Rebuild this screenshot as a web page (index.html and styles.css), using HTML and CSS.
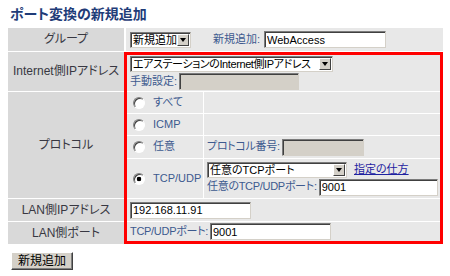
FILE: index.html
```html
<!DOCTYPE html>
<html lang="ja">
<head>
<meta charset="utf-8">
<title>ポート変換の新規追加</title>
<link rel="stylesheet" href="styles.css">
</head>
<body>
<h1 class="title">ポート変換の新規追加</h1>
<form class="port-form">
<table class="form">
  <tr class="row-group">
    <th class="head sep">グループ</th>
    <td class="val plain">
      <div class="line">
        <span class="ctl sel-group"><select><option>新規追加</option></select><span class="arrow"></span></span>
        <span class="lbl new-lbl">新規追加:</span><input class="text in-group" type="text" value="WebAccess">
      </div>
    </td>
  </tr>
  <tr class="row-inet">
    <th class="head sep">Internet側IPアドレス</th>
    <td class="val hl hl-top cut">
      <div class="line">
        <span class="ctl sel-inet"><select class="narrow"><option>エアステーションのInternet側IPアドレス</option></select><span class="arrow"></span></span>
      </div>
      <div class="line line-gap">
        <span class="lbl">手動設定:</span><input class="text in-manual" type="text" disabled>
      </div>
    </td>
  </tr>
  <tr class="row-proto">
    <th class="head sep">プロトコル</th>
    <td class="val hl cut proto-cell">
      <table class="proto">
        <tr class="p-all">
          <td class="opt"><label class="radio"><input type="radio" name="proto"><span>すべて</span></label></td>
          <td class="det"></td>
        </tr>
        <tr class="p-icmp">
          <td class="opt"><label class="radio"><input type="radio" name="proto"><span>ICMP</span></label></td>
          <td class="det"></td>
        </tr>
        <tr class="p-any">
          <td class="opt"><label class="radio"><input type="radio" name="proto"><span>任意</span></label></td>
          <td class="det"><div class="line"><span class="lbl tight">プロトコル番号:</span><input class="text in-protonum" type="text" disabled></div></td>
        </tr>
        <tr class="p-tcp">
          <td class="opt"><label class="radio"><input type="radio" name="proto" checked><span>TCP/UDP</span></label></td>
          <td class="det">
            <div class="line">
              <span class="ctl sel-tcp"><select><option>任意のTCPポート</option></select><span class="arrow"></span></span>
              <a class="how" href="#">指定の仕方</a>
            </div>
            <div class="line line-gap">
              <span class="lbl tight">任意のTCP/UDPポート:</span><input class="text in-tcpport" type="text" value="9001">
            </div>
          </td>
        </tr>
      </table>
    </td>
  </tr>
  <tr class="row-lanip">
    <th class="head sep">LAN側IPアドレス</th>
    <td class="val hl cut">
      <div class="line"><input class="text in-lanip" type="text" value="192.168.11.91"></div>
    </td>
  </tr>
  <tr class="row-lanport">
    <th class="head">LAN側ポート</th>
    <td class="val hl hl-bottom">
      <div class="line"><span class="lbl tight">TCP/UDPポート:</span><input class="text in-lanport" type="text" value="9001"></div>
    </td>
  </tr>
</table>
<button class="submit" type="button">新規追加</button>
</form>
</body>
</html>
```
FILE: styles.css
```css
* { box-sizing: border-box; }
html, body { margin: 0; background: #fff; }
body {
  padding: 6px 0 0 8px;
  font-family: "Liberation Sans", "Noto Sans CJK JP", sans-serif;
  font-size: 11px;
  line-height: 1.2;
  font-feature-settings: "palt";
  color: #3d5a8f;
}
.title {
  margin: 0 0 6px 2px;
  height: 16px;
  font-size: 14px;
  line-height: 16px;
  font-weight: bold;
  color: #1f3c78;
}
.port-form { margin: 0; }

.form {
  width: 435px;
  border-collapse: separate;
  border-spacing: 0;
  table-layout: fixed;
}
.form .head {
  width: 116px;
  padding: 0;
  background: #d9d9d9;
  color: #383842;
  font-size: 12px;
  font-weight: normal;
  text-align: center;
  vertical-align: middle;
}
.form .head.sep { border-bottom: 1px solid #fff; }

.val {
  padding: 0 0 0 3px;
  background: #e8e8e8;
  vertical-align: middle;
}
.val.plain { border-left: 2px solid #fff; border-bottom: 1px solid #fff; padding-left: 4px; }
.val.hl { border-left: 3px solid #f00; border-right: 3px solid #f00; }
.val.hl-top { border-top: 3px solid #f00; }
.val.hl-bottom { border-bottom: 3px solid #f00; }
.val.cut { box-shadow: inset 0 -1px 0 #fff; padding-bottom: 1px; }
.val.proto-cell { padding: 0 0 1px 0; }

.row-group > * { height: 24px; }
.row-inet > * { height: 40px; }
.row-proto > * { height: 107px; }
.row-lanip > * { height: 23px; }
.row-lanport > * { height: 22px; }

.line { display: flex; align-items: center; }
.line-gap { margin-top: 1px; }
.lbl { white-space: nowrap; }
.lbl.tight { letter-spacing: -0.3px; }
.new-lbl { margin-left: 22px; margin-right: 2px; }
.lbl + .text { margin-left: 2px; }

/* nested protocol table */
.proto {
  width: 100%;
  border-collapse: separate;
  border-spacing: 0;
  table-layout: fixed;
}
.proto td { background: #e8e8e8; padding: 0; vertical-align: middle; }
.proto tr:not(:last-child) td { border-bottom: 1px solid #fff; }
.proto .opt { width: 77px; border-right: 1px solid #fff; }
.proto .det { padding-left: 3px; padding-right: 2px; }
.p-all > td, .p-icmp > td { height: 22px; }
.p-any > td { height: 23px; }
.p-tcp > td { height: 39px; }

.radio { display: flex; align-items: center; padding-left: 6px; white-space: nowrap; }
.radio input {
  -webkit-appearance: none;
  appearance: none;
  width: 12px;
  height: 12px;
  margin: 0 8px 0 0;
  border-radius: 50%;
  border: 1px solid;
  border-color: #808080 #fff #fff #808080;
  box-shadow: inset 1px 1px 0 #404040;
  background: #fff;
  flex: none;
}
.radio input:checked {
  background: radial-gradient(circle at 50% 50%, #000 0 2px, #fff 2.6px);
}

/* select-like control */
.ctl {
  display: inline-flex;
  align-items: stretch;
  height: 16px;
  background: #fff;
  border: 1px solid;
  border-color: #7b7b7b #d4d0c8 #d4d0c8 #7b7b7b;
  box-shadow: inset 1px 1px 0 #404040;
  flex: none;
}
.ctl select {
  -webkit-appearance: none;
  appearance: none;
  flex: 1;
  min-width: 0;
  height: 14px;
  margin: 0;
  padding: 0 0 0 2px;
  border: 0;
  background: transparent;
  font-family: "Liberation Sans", "Noto Sans CJK JP", sans-serif;
  font-size: 11px;
  line-height: 14px;
  font-feature-settings: "palt";
  color: #000;
  outline: 0;
}
.ctl select.narrow { letter-spacing: -0.4px; }
.ctl .arrow {
  flex: none;
  width: 12px;
  height: 12px;
  margin: 1px 1px 1px 0;
  background: #d4d0c8;
  border: 1px solid;
  border-color: #fff #404040 #404040 #fff;
  display: flex;
  align-items: center;
  justify-content: center;
}
.ctl .arrow::after {
  content: "";
  border-left: 3.5px solid transparent;
  border-right: 3.5px solid transparent;
  border-top: 4px solid #000;
}
.sel-group { width: 61px; }
.sel-inet { width: 203px; }
.sel-tcp { width: 140px; }

.text {
  height: 17px;
  margin: 0;
  padding: 0 2px;
  border: 1px solid;
  border-color: #7b7b7b #d4d0c8 #d4d0c8 #7b7b7b;
  box-shadow: inset 1px 1px 0 #404040;
  background: #fff;
  font-family: "Liberation Sans", "Noto Sans CJK JP", sans-serif;
  font-size: 11px;
  line-height: 15px;
  color: #000;
  outline: 0;
  flex: none;
}
.text:disabled { background: #d4d0c8; }
.in-group { width: 122px; }
.in-manual { width: 120px; }
.in-protonum { width: 82px; }
.in-tcpport { flex: 1 1 auto; width: 122px; min-width: 0; }
.in-lanip { width: 121px; }
.in-lanport { width: 121px; }

.how {
  margin-left: 7px;
  color: #1e22a0;
  text-decoration: underline;
  white-space: nowrap;
}

.submit {
  display: block;
  margin: 8px 0 0 3px;
  width: 62px;
  height: 18px;
  padding: 0;
  background: #d4d0c8;
  border: 1px solid;
  border-color: #fff #404040 #404040 #fff;
  box-shadow: inset -1px -1px 0 #808080;
  font-family: "Liberation Sans", "Noto Sans CJK JP", sans-serif;
  font-size: 12px;
  line-height: 14px;
  color: #000;
}
```
